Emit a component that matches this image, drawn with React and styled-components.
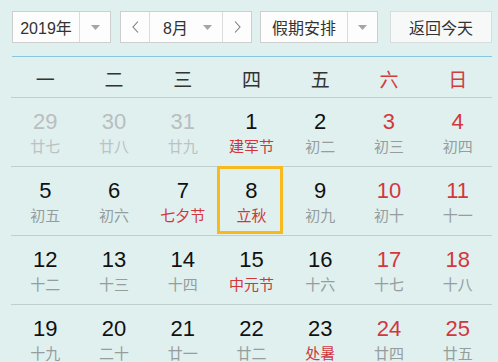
import React from "react";
import styled, { createGlobalStyle } from "styled-components";

const Global = createGlobalStyle`
  html, body { margin: 0; padding: 0; background: #dff0ef; }
  body { font-family: "Liberation Sans", "Noto Sans CJK SC", sans-serif; }
`;

const Wrap = styled.div`
  width: 482px;
  margin-left: 11px;
  padding-top: 11px;
  height: 351px;
  overflow: hidden;
`;

const Toolbar = styled.div`
  display: flex;
  align-items: center;
  height: 32px;
  padding-left: 1px;
  padding-right: 1px;
  margin-bottom: 13px;
`;

const Box = styled.div`
  display: flex;
  align-items: stretch;
  height: 32px;
  box-sizing: border-box;
  border: 1px solid #cdcfcf;
  background: #fdfdfd;
  margin-right: ${(p) => p.$gap || 0}px;
  width: ${(p) => p.$w}px;
  font-size: 16px;
  color: #333;
`;

const Seg = styled.div`
  display: flex;
  align-items: center;
  justify-content: center;
  width: ${(p) => (p.$w ? p.$w + "px" : "auto")};
  flex: ${(p) => (p.$w ? "none" : 1)};
  border-left: ${(p) => (p.$div ? "1px solid #dadcdc" : "none")};
  box-sizing: border-box;
`;

const MonthSeg = styled.div`
  flex: 1;
  display: flex;
  align-items: center;
  padding-left: 13px;
  border-left: 1px solid #dadcdc;
`;

const MonthLabel = styled.span`
  width: 40px;
`;

const TodayBtn = styled.div`
  margin-left: auto;
  width: 102px;
  height: 32px;
  box-sizing: border-box;
  border: 1px solid #d9dcdc;
  background: #f7f8f8;
  display: flex;
  align-items: center;
  justify-content: center;
  font-size: 16px;
  color: #333;
`;

const Caret = () => (
  <svg width="9" height="5" viewBox="0 0 9 5">
    <polygon points="0,0 9,0 4.5,5" fill="#a4a6a6" />
  </svg>
);

const Chevron = ({ dir }) => (
  <svg width="7" height="12" viewBox="0 0 7 12">
    <polyline
      points={dir === "left" ? "6,0.5 1,6 6,11.5" : "1,0.5 6,6 1,11.5"}
      fill="none"
      stroke="#7a7c7c"
      strokeWidth="1.1"
    />
  </svg>
);

const Calendar = styled.div`
  border-top: 1.5px solid #86c6e2;
  margin-left: 1px;
  margin-right: 1px;
`;

const WeekHead = styled.div`
  display: grid;
  grid-template-columns: repeat(7, 1fr);
  height: 40px;
  align-items: center;
  margin-left: -1px;
`;

const WeekName = styled.div`
  text-align: center;
  font-size: 19px;
  color: ${(p) => (p.$red ? "#d33b3f" : "#333")};
  padding-top: 2px;
`;

const Row = styled.div`
  display: grid;
  grid-template-columns: repeat(7, 1fr);
  border-top: 1px solid #bfcfcf;
  height: 68px;
  margin-left: -1px;
`;

const Cell = styled.div`
  position: relative;
  display: flex;
  flex-direction: column;
  align-items: center;
  padding-top: 12px;
  &::after {
    content: "";
    display: ${(p) => (p.$sel ? "block" : "none")};
    position: absolute;
    left: 0;
    right: 3px;
    top: -1px;
    bottom: 1px;
    border: 3px solid #f7b91d;
  }
`;

const Num = styled.div`
  font-size: 22px;
  line-height: 24px;
  color: ${(p) => (p.$dim ? "#b9bebe" : p.$red ? "#d3373d" : "#111")};
`;

const Lunar = styled.div`
  font-size: 15px;
  line-height: 26px;
  color: ${(p) => (p.$dim ? "#bcc2c2" : p.$fest ? "#d2363c" : "#959d9d")};
`;

const weeks = ["一", "二", "三", "四", "五", "六", "日"];

const rows = [
  [
    [29, "廿七", "dim"],
    [30, "廿八", "dim"],
    [31, "廿九", "dim"],
    [1, "建军节", "fest"],
    [2, "初二"],
    [3, "初三"],
    [4, "初四"],
  ],
  [
    [5, "初五"],
    [6, "初六"],
    [7, "七夕节", "fest"],
    [8, "立秋", "fest", true],
    [9, "初九"],
    [10, "初十"],
    [11, "十一"],
  ],
  [
    [12, "十二"],
    [13, "十三"],
    [14, "十四"],
    [15, "中元节", "fest"],
    [16, "十六"],
    [17, "十七"],
    [18, "十八"],
  ],
  [
    [19, "十九"],
    [20, "二十"],
    [21, "廿一"],
    [22, "廿二"],
    [23, "处暑", "fest"],
    [24, "廿四"],
    [25, "廿五"],
  ],
];

export default function App() {
  return (
    <>
      <Global />
      <Wrap>
        <Toolbar>
          <Box $w={99} $gap={9}>
            <Seg>2019年</Seg>
            <Seg $w={31} $div>
              <Caret />
            </Seg>
          </Box>
          <Box $w={132} $gap={8}>
            <Seg $w={28}>
              <Chevron dir="left" />
            </Seg>
            <MonthSeg>
              <MonthLabel>8月</MonthLabel>
              <Caret />
            </MonthSeg>
            <Seg $w={29} $div>
              <Chevron dir="right" />
            </Seg>
          </Box>
          <Box $w={118}>
            <Seg>假期安排</Seg>
            <Seg $w={30} $div>
              <Caret />
            </Seg>
          </Box>
          <TodayBtn>返回今天</TodayBtn>
        </Toolbar>
        <Calendar>
          <WeekHead>
            {weeks.map((w, i) => (
              <WeekName key={w} $red={i >= 5}>
                {w}
              </WeekName>
            ))}
          </WeekHead>
          {rows.map((r, ri) => (
            <Row key={ri}>
              {r.map(([n, l, kind, sel], ci) => (
                <Cell key={ci} $sel={sel}>
                  <Num $dim={kind === "dim"} $red={ci >= 5}>
                    {n}
                  </Num>
                  <Lunar $dim={kind === "dim"} $fest={kind === "fest"}>
                    {l}
                  </Lunar>
                </Cell>
              ))}
            </Row>
          ))}
        </Calendar>
      </Wrap>
    </>
  );
}
